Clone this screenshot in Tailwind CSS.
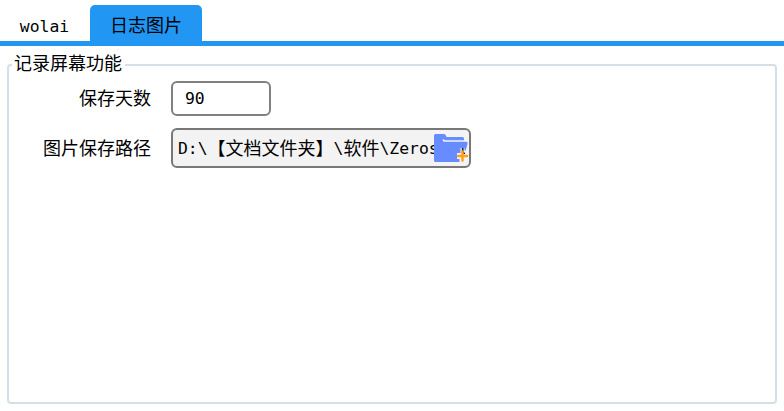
<!DOCTYPE html>
<html lang="zh-CN">
<head>
<meta charset="utf-8">
<title>设置</title>
<script src="https://cdn.jsdelivr.net/npm/@tailwindcss/browser@4"></script>
</head>
<body class="h-[411px] w-[784px] overflow-hidden bg-white font-['Noto_Sans_CJK_SC',sans-serif] text-[18px] leading-6 text-black">
<div class="flex h-full flex-col">
  <nav class="flex h-[46px] shrink-0 items-end border-b-[5px] border-[#2196f3] pt-[5px]">
    <button class="h-9 w-[90px] pb-px pr-px pt-2 font-['DejaVu_Sans_Mono',monospace] text-[16.4px] leading-6">wolai</button>
    <button class="h-9 w-28 rounded-t-[5px] bg-[#2196f3] pb-0.5 pt-1 leading-6">日志图片</button>
  </nav>
  <fieldset class="mx-[7px] mt-[6px] h-[352px] rounded-[4px] border-2 border-[#d5dfe5] px-0">
    <legend class="ml-[3px] h-[26px] pl-0.5 pr-[3px] leading-[21px]">记录屏幕功能</legend>
    <div class="mt-[3px] flex flex-col gap-3">
      <div class="flex items-center">
        <label class="w-[142px] pb-[3px] text-right">保存天数</label>
        <div class="ml-5 flex h-[35px] w-[100px] items-center rounded-md border-2 border-[#808080] bg-white pl-3 font-['DejaVu_Sans_Mono',monospace] text-[16.4px]">90</div>
      </div>
      <div class="flex items-center">
        <label class="w-[142px] pb-0.5 text-right">图片保存路径</label>
        <div class="relative ml-5 h-10 w-[300px] rounded-md border-2 border-[#787878] bg-[#f3f3f3] pl-[5px]">
          <div class="flex h-full w-[287px] items-center overflow-hidden whitespace-nowrap">
            <span class="pt-px font-['DejaVu_Sans_Mono',monospace] text-[16.4px]">D:\</span><span class="pb-0.5">【文档文件夹】</span><span class="pt-px font-['DejaVu_Sans_Mono',monospace] text-[16.4px]">\</span><span class="pb-0.5">软件</span><span class="pt-px font-['DejaVu_Sans_Mono',monospace] text-[16.4px]">\Zerosbot</span>
          </div>
          <svg class="absolute left-[261px] top-1 h-[29px] w-[35px]" viewBox="0 0 35 29">
            <path fill="#668cff" d="M1.500 28Q0 28 0 26.500V1.500Q0 0 1.500 0H10Q11 0 11.500 1L12.700 3H28.500Q30 3 30 4.500V7.800H32.500Q34 7.800 33.500 10L31.700 16.500H30.500V14H26.500V19H23V25H25.500V28Z"/>
            <path fill="none" stroke="#f3f3f3" stroke-width="1.500" d="M9 5.500L10.200 7.100H30"/>
            <path fill="none" stroke="#ff9f18" stroke-width="2.500" stroke-linecap="round" d="M28.500 17.500V26.500M24 22H33"/>
          </svg>
        </div>
      </div>
    </div>
  </fieldset>
</div>
</body>
</html>
